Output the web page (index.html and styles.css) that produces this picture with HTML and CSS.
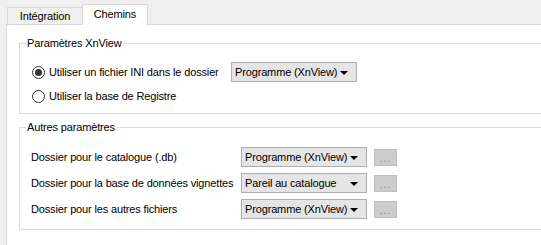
FILE: index.html
```html
<!DOCTYPE html>
<html lang="fr">

<head>
    <meta charset="UTF-8">
    <meta name="viewport" content="width=device-width, initial-scale=1.0">
    <title>Chemins</title>
    <link rel="stylesheet" href="styles.css">
</head>

<body>
    <div class="tabs">
        <div class="tab">Intégration</div>
        <div class="tab active">Chemins</div>
        <div class="tab-fill"></div>
    </div>

    <div class="panel">
        <fieldset class="group group-xnview">
            <legend>Paramètres XnView</legend>

            <div class="option-row">
                <span class="radio checked"></span>
                <span class="option-label">Utiliser un fichier INI dans le dossier</span>
                <div class="combo">Programme (XnView)<span class="arrow"></span></div>
            </div>
            <div class="option-row">
                <span class="radio"></span>
                <span class="option-label">Utiliser la base de Registre</span>
            </div>
        </fieldset>

        <fieldset class="group group-other">
            <legend>Autres paramètres</legend>

            <div class="path-grid">
                <span class="path-label">Dossier pour le catalogue (.db)</span>
                <div class="combo">Programme (XnView)<span class="arrow"></span></div>
                <button class="browse" disabled>...</button>

                <span class="path-label">Dossier pour la base de données vignettes</span>
                <div class="combo">Pareil au catalogue<span class="arrow"></span></div>
                <button class="browse" disabled>...</button>

                <span class="path-label">Dossier pour les autres fichiers</span>
                <div class="combo">Programme (XnView)<span class="arrow"></span></div>
                <button class="browse" disabled>...</button>
            </div>
        </fieldset>
    </div>
</body>

</html>
```

FILE: styles.css
```css
* {
    box-sizing: border-box;
    margin: 0;
    padding: 0;
}

body {
    font-family: 'Liberation Sans', Arial, sans-serif;
    font-size: 11px;
    letter-spacing: -0.15px;
    color: #000;
    background-color: #f0f0f0;
    overflow: hidden;
    width: 541px;
    height: 245px;
}

/* tab strip */
.tabs {
    display: flex;
    align-items: flex-end;
    height: 25px;
    padding-left: 6px;
}

.tab {
    height: 17px;
    width: 75px;
    text-align: center;
    line-height: 16px;
    border: 1px solid #d9d9d9;
    border-bottom: none;
    border-right: none;
    background-color: #f0f0f0;
    margin-bottom: 1px;
    white-space: nowrap;
}

.tab:first-child {
    margin-left: 1px;
}

.tab.active {
    height: 21px;
    width: 66px;
    line-height: 19px;
    background-color: #fff;
    border-right: 1px solid #d9d9d9;
    margin-bottom: 0;
    position: relative;
    z-index: 1;
}

.tab-fill {
    flex: 1;
    border-bottom: 1px solid #d9d9d9;
}

.panel {
    width: 535px;
    height: 221px;
    margin-left: 6px;
    margin-top: -1px;
    border-left: 1px solid #d9d9d9;
    border-top: 1px solid #d9d9d9;
    background-color: #fff;
    padding: 10px 0 0 12px;
    overflow: hidden;
}

/* group boxes */
.group {
    width: 560px;
    border: 1px solid #dcdcdc;
    padding: 0 0 0 6px;
}

.group legend {
    line-height: 16px;
    padding: 0 2px 0 1px;
}

.group-xnview {
    padding-top: 11px;
    padding-bottom: 7px;
}

.group-other {
    margin-top: 5px;
    padding-top: 12px;
    padding-bottom: 10px;
}

.option-row {
    display: flex;
    align-items: center;
    height: 20px;
    margin-bottom: 4px;
    white-space: nowrap;
}

.option-row:last-child {
    margin-bottom: 0;
}

.radio {
    width: 13px;
    height: 13px;
    border: 1px solid #333;
    border-radius: 50%;
    background-color: #fff;
    margin-left: 6px;
    margin-right: 4px;
    display: flex;
    align-items: center;
    justify-content: center;
}

.radio.checked::after {
    content: "";
    width: 7px;
    height: 7px;
    border-radius: 50%;
    background-color: #333;
}

.option-label {
    width: 182px;
}

.combo {
    position: relative;
    width: 126px;
    height: 20px;
    line-height: 18px;
    padding-left: 3px;
    border: 1px solid #adadad;
    background-color: #e5e5e5;
    white-space: nowrap;
}

.arrow {
    position: absolute;
    right: 8px;
    top: 8px;
    border-left: 4px solid transparent;
    border-right: 4px solid transparent;
    border-top: 4px solid #000;
}

.path-grid {
    display: grid;
    grid-template-columns: 203px 126px 23px;
    column-gap: 7px;
    row-gap: 6px;
    align-items: center;
    padding-left: 5px;
    white-space: nowrap;
}

.browse {
    width: 23px;
    height: 17px;
    border: 1px solid #bfbfbf;
    background-color: #cccccc;
    color: #838383;
    font-family: inherit;
    font-size: 10px;
    line-height: 18px;
    letter-spacing: 1px;
}
```
